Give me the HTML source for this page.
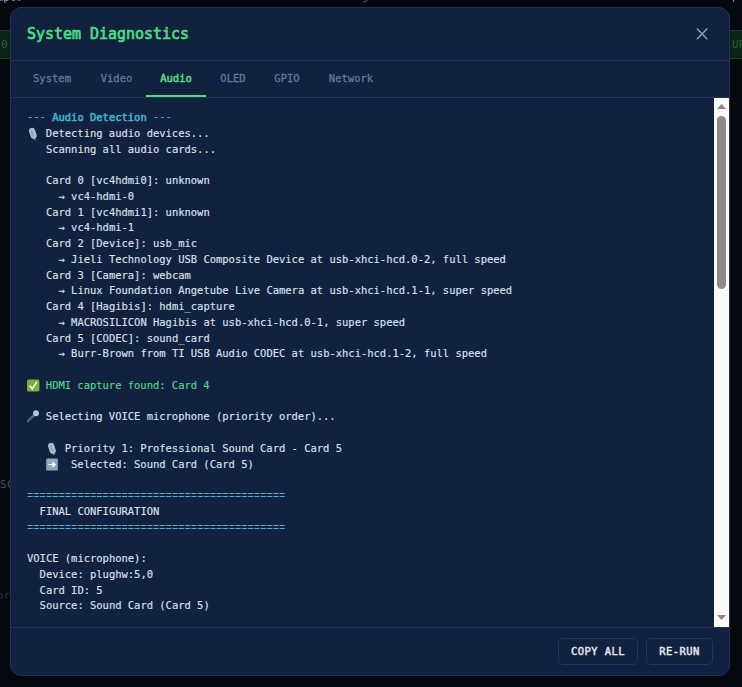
<!DOCTYPE html>
<html lang="en">
<head>
<meta charset="utf-8">
<title>System Diagnostics</title>
<style>
*{box-sizing:border-box;margin:0;padding:0}
html,body{width:742px;height:687px;overflow:hidden;background:#05080f;}
body{font-family:"DejaVu Sans Mono","Liberation Mono",monospace;position:relative;color:#e2e8f0}
.bg{position:absolute;inset:0;background:#05080f;overflow:hidden}
.bt{position:absolute;font-size:10.5px;line-height:14px;white-space:pre}
.gb{position:absolute;top:30px;height:29px;background:#0b2215;border:1px solid #16401f;color:#2d6338;font-size:11px;line-height:14px}
.modal{position:absolute;left:10px;top:7px;width:720px;height:669px;background:#12213f;border:1px solid #21314f;border-radius:11px;overflow:hidden}
.hdr{position:absolute;left:0;top:0;right:0;height:53px;border-bottom:1px solid #223556}
.title{position:absolute;left:16px;top:15px;font-size:15px;line-height:22px;-webkit-text-stroke:0.7px currentColor;letter-spacing:-0.03px;color:#4ade80;white-space:pre}
.close{position:absolute;left:685px;top:20px;width:12px;height:12px}
.tabs{position:absolute;left:0;top:53px;right:0;height:37px;border-bottom:1px solid #223556}
.tab{position:absolute;top:0;height:36px;line-height:34px;-webkit-text-stroke:0.3px currentColor;font-size:10.5px;color:#64779a;white-space:pre;text-align:center}
.tab.act{color:#4ade80;-webkit-text-stroke:0.55px currentColor;border-bottom:2px solid #4ade80}
.content{position:absolute;left:0;top:90px;width:703px;height:529px;overflow:hidden}
.ico{position:absolute;left:0;top:0}
pre{position:absolute;left:16px;top:12px;letter-spacing:-0.021px;-webkit-text-stroke:0.15px currentColor;font-family:inherit;font-size:10.5px;line-height:15.75px;color:#dae0ea;white-space:pre}
.c{color:#3eaec6;-webkit-text-stroke:0.6px currentColor}.g{color:#52d68a}.e{color:#49b4cb;display:inline-block;height:15.75px;vertical-align:top;font-family:"Liberation Mono","DejaVu Sans Mono",monospace;letter-spacing:0;transform:translateY(0.9px) scaleY(1.15);-webkit-text-stroke:0}
.em{display:inline-block;width:12.56px;height:15.75px;overflow:hidden;vertical-align:top;opacity:0;letter-spacing:0;white-space:nowrap}
.d{position:relative;top:-1px;-webkit-text-stroke:0.1px currentColor}
.sb{position:absolute;left:703px;top:90px;width:15px;height:529px;background:#fafafa}
.thumb{position:absolute;left:3px;top:18px;width:9px;height:173px;border-radius:4.5px;background:#8c8b89}
.arr{position:absolute;left:0;width:15px;height:15px}
.ftr{position:absolute;left:0;top:619px;right:0;height:48px;border-top:1px solid #223556}
.btn{position:absolute;top:10px;height:27px;border:1px solid #22355a;border-radius:5px;font-size:10.5px;letter-spacing:.45px;line-height:24px;text-align:center;color:#e2e8f0;-webkit-text-stroke:0.45px currentColor;white-space:pre}
</style>
</head>
<body>
<div class="bg">
  <div class="bt" style="left:-22px;top:-10px;color:#9aa0aa">Prompt:</div>
  <div class="bt" style="left:337px;top:-11px;color:#555b66">Background</div>
  <div class="bt" style="left:713px;top:-11px;color:#9aa0aa">Output</div>
  <div class="gb" style="left:-20px;width:34px"><span style="position:absolute;left:20px;top:7px">0</span></div>
  <div class="gb" style="left:726px;width:40px"><span style="position:absolute;left:5px;top:7px">UP</span></div>
  <div class="bt" style="left:0px;top:478px;color:#4a5160;font-size:11px;letter-spacing:.5px">SC</div>
  <div class="bt" style="left:-3px;top:589px;color:#2e3440;font-size:11px">or</div>
</div>
<div class="modal">
  <div class="hdr">
    <div class="title">System Diagnostics</div>
    <svg class="close" viewBox="0 0 12 12"><path d="M.9 .6L11.3 11.2M11.3 .6L.9 11.2" stroke="#8b9cba" stroke-width="1.45" fill="none"/></svg>
  </div>
  <div class="tabs">
    <div class="tab" style="left:6px;width:70px">System</div>
    <div class="tab" style="left:76px;width:59px">Video</div>
    <div class="tab act" style="left:135px;width:60px">Audio</div>
    <div class="tab" style="left:195px;width:54px">OLED</div>
    <div class="tab" style="left:249px;width:54px">GPIO</div>
    <div class="tab" style="left:303px;width:74px">Network</div>
  </div>
  <div class="content">
<svg class="ico" width="703" height="529" viewBox="11 98 703 529">
  <g transform="translate(33 133.7) rotate(-18)"><rect x="-3.1" y="-6" width="6.2" height="11" rx="3.1" fill="#a3c1cb"/><path d="M-1.2 4.6L0 7L1.2 4.6Z" fill="#9bbac4"/><path d="M-.6 -3.6V2.4" stroke="#7fa0ad" stroke-width="1.3" fill="none"/></g>
  <rect x="27" y="379.5" width="12.4" height="12" rx="1.6" fill="#79b03d"/><path d="M29.6 385.6L32.3 388.8L36.9 381.9" stroke="#e9f7d4" stroke-width="1.7" fill="none"/>
  <path d="M28 421L34 415.2" stroke="#56616f" stroke-width="2.6" stroke-linecap="round"/><circle cx="36" cy="413.3" r="3" fill="#b7c6d3"/>
  <g transform="translate(52.1 448.8) rotate(-18)"><rect x="-3.1" y="-6" width="6.2" height="11" rx="3.1" fill="#a3c1cb"/><path d="M-1.2 4.6L0 7L1.2 4.6Z" fill="#9bbac4"/><path d="M-.6 -3.6V2.4" stroke="#7fa0ad" stroke-width="1.3" fill="none"/></g>
  <rect x="46.2" y="458.5" width="11.6" height="12" rx="1.2" fill="#90a8b8"/><path d="M48.4 464.5H54M52.9 462.5L55.4 464.5L52.9 466.5Z" stroke="#f4f8fb" stroke-width="1.1" fill="#f4f8fb"/>
</svg>
<pre><span class="c"><span class="d">---</span> Audio Detection <span class="d">---</span></span>
<span class="em">🎙️</span> Detecting audio devices...
   Scanning all audio cards...

   Card 0 [vc4hdmi0]: unknown
     → vc4-hdmi-0
   Card 1 [vc4hdmi1]: unknown
     → vc4-hdmi-1
   Card 2 [Device]: usb_mic
     → Jieli Technology USB Composite Device at usb-xhci-hcd.0-2, full speed
   Card 3 [Camera]: webcam
     → Linux Foundation Angetube Live Camera at usb-xhci-hcd.1-1, super speed
   Card 4 [Hagibis]: hdmi_capture
     → MACROSILICON Hagibis at usb-xhci-hcd.0-1, super speed
   Card 5 [CODEC]: sound_card
     → Burr-Brown from TI USB Audio CODEC at usb-xhci-hcd.1-2, full speed

<span class="g"><span class="em">✅</span> HDMI capture found: Card 4</span>

<span class="em">🎤</span> Selecting VOICE microphone (priority order)...

   <span class="em">🎙️</span> Priority 1: Professional Sound Card - Card 5
   <span class="em">➡️</span>  Selected: Sound Card (Card 5)

<span class="e">=========================================</span>
  FINAL CONFIGURATION
<span class="e">=========================================</span>

VOICE (microphone):
  Device: plughw:5,0
  Card ID: 5
  Source: Sound Card (Card 5)
</pre>
  </div>
  <div class="sb"><svg class="arr" style="top:0" viewBox="0 0 15 15"><path d="M3 11L7.5 6L12 11Z" fill="#8a8487"/></svg><div class="thumb"></div><svg class="arr" style="bottom:0" viewBox="0 0 15 15"><path d="M3 3L7.5 8L12 3Z" fill="#8a8487"/></svg></div>
  <div class="ftr">
    <div class="btn" style="left:547px;width:80px">COPY ALL</div>
    <div class="btn" style="left:635px;width:67px">RE-RUN</div>
  </div>
</div>
</body>
</html>
